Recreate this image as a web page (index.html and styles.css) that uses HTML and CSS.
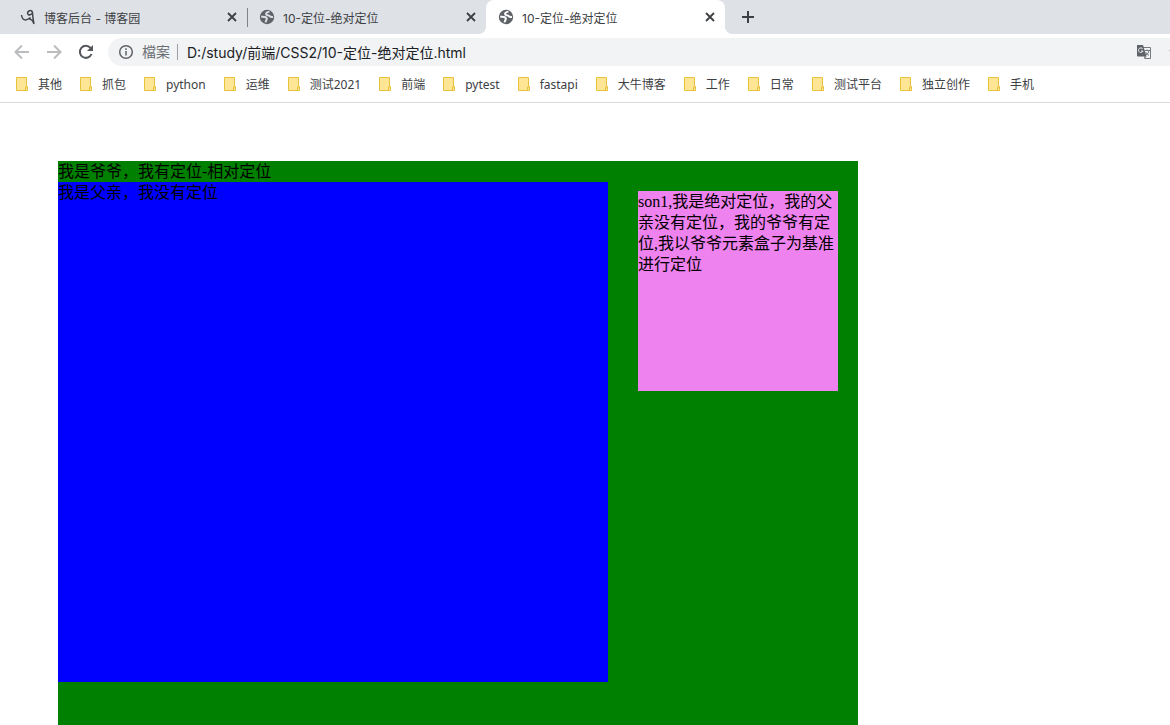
FILE: index.html
```html
<!DOCTYPE html>
<html lang="zh-CN">
<head>
  <meta charset="UTF-8">
  <meta name="viewport" content="width=device-width, initial-scale=1.0">
  <title>10-定位-绝对定位</title>
  <link rel="stylesheet" href="styles.css">
</head>
<body>
  <!-- 图标 -->
  <svg class="symbols" aria-hidden="true">
    <symbol id="globe" viewBox="0 0 16 16">
      <circle cx="8" cy="8" r="7.200" fill="#5f6368"/>
      <path d="M10.500 2.600C8 3 6.500 4.200 7.200 5.500c.6 1 2.400.4 3.300 1.400.8 1 1.800 1.400 3.500 1M2.200 7.800C4.500 7.600 7.300 8 7.800 9.400c.3 1.400-1 2-1.200 3.900" fill="none" stroke="currentColor" stroke-width="1.900"/>
    </symbol>
    <symbol id="close" viewBox="0 0 10 10">
      <path d="M1 1l8 8M9 1L1 9" fill="none" stroke="#3c4043" stroke-width="1.800"/>
    </symbol>
    <symbol id="folder" viewBox="0 0 12 14">
      <path d="M.5.500h10v9h1v4H.500z" fill="#ffe694" stroke="#e8c23f"/>
      <path d="M9.500 13.500v-3.500h1.500" fill="none" stroke="#e8c23f"/>
    </symbol>
  </svg>

  <!-- 标签栏 -->
  <div class="tabs">
    <div class="tab">
      <svg class="tab-icon" viewBox="0 0 16 16"><path d="M1.500 6c.5 3.500 2 5 4 5 1.500 0 3-1 5-2.500M12.500 3.500c-.3-2-2-2.300-3.500-1.500C7.300 3 7 5 8.500 5.700c1.600.6 3.500-.5 4-2.200.2 4 .5 7 1.500 11.500-1-3-2.500-5-5-5" fill="none" stroke="#45484b" stroke-width="1.500"/></svg>
      <button class="tab-title">博客后台 - 博客园</button>
      <button class="tab-close" aria-label="关闭"><svg><use href="#close"/></svg></button>
    </div>
    <div class="tab divided">
      <svg class="tab-icon"><use href="#globe"/></svg>
      <button class="tab-title">10-定位-绝对定位</button>
      <button class="tab-close" aria-label="关闭"><svg><use href="#close"/></svg></button>
    </div>
    <div class="tab active">
      <svg class="tab-icon"><use href="#globe"/></svg>
      <button class="tab-title">10-定位-绝对定位</button>
      <button class="tab-close" aria-label="关闭"><svg><use href="#close"/></svg></button>
    </div>
    <button class="new-tab" aria-label="新标签页"><svg viewBox="0 0 12 12"><path d="M6 0v12M0 6h12" stroke="#3c4043" stroke-width="2"/></svg></button>
  </div>

  <!-- 地址栏 -->
  <div class="toolbar">
    <button class="nav disabled" aria-label="后退"><svg viewBox="0 0 16 16"><path d="M15 8H2M8 1.500L1.500 8 8 14.500"/></svg></button>
    <button class="nav disabled" aria-label="前进"><svg viewBox="0 0 16 16"><path d="M1 8h13M8 1.500L14.500 8 8 14.500"/></svg></button>
    <button class="nav" aria-label="刷新"><svg viewBox="0 0 16 16"><path d="M13.500 10A6 6 0 1 1 12.500 4l1 1.500"/><path class="solid" d="M15 1v6H9z"/></svg></button>
    <div class="address">
      <svg class="info" viewBox="0 0 16 16"><circle cx="8" cy="8" r="6.300"/><path d="M8 7v4.500M8 4.300v1.600"/></svg>
      <label for="url">檔案</label>
      <input type="text" id="url" value="D:/study/前端/CSS2/10-定位-绝对定位.html">
      <button class="translate" aria-label="翻译"><svg viewBox="0 0 16 16">
        <path d="M6 3.500h8.500v11H8.500" fill="#f1f3f4" stroke="#777a7d"/>
        <path d="M1 1h6l3.500 11.500H2a1 1 0 0 1-1-1z" fill="#5f6368"/>
        <path d="M6.800 5A2.300 2.300 0 1 0 7 7H5" fill="none" stroke="#f1f3f4"/>
        <path d="M8.500 6.500H14M11 5.500v1M13 6.500c-.4 2.300-1.500 3.500-3 4.500M9.500 8c.7 1.500 2 2.500 3.500 3.500" fill="none" stroke="#777a7d"/>
        <path d="M8 12.500h2.500l-2 2z" fill="#5f6368"/>
      </svg></button>
      <button class="star" aria-label="收藏"><svg viewBox="0 0 16 16"><path d="M8 1l2 5h6l-5 4 2 5-5-3-5 3 2-5-5-4h6z"/></svg></button>
    </div>
  </div>

  <!-- 书签栏 -->
  <nav class="bookmarks">
    <a href="#"><svg><use href="#folder"/></svg>其他</a>
    <a href="#"><svg><use href="#folder"/></svg>抓包</a>
    <a href="#"><svg><use href="#folder"/></svg>python</a>
    <a href="#"><svg><use href="#folder"/></svg>运维</a>
    <a href="#"><svg><use href="#folder"/></svg>测试2021</a>
    <a href="#"><svg><use href="#folder"/></svg>前端</a>
    <a href="#"><svg><use href="#folder"/></svg>pytest</a>
    <a href="#"><svg><use href="#folder"/></svg>fastapi</a>
    <a href="#"><svg><use href="#folder"/></svg>大牛博客</a>
    <a href="#"><svg><use href="#folder"/></svg>工作</a>
    <a href="#"><svg><use href="#folder"/></svg>日常</a>
    <a href="#"><svg><use href="#folder"/></svg>测试平台</a>
    <a href="#"><svg><use href="#folder"/></svg>独立创作</a>
    <a href="#"><svg><use href="#folder"/></svg>手机</a>
  </nav>

  <!-- 页面内容 -->
  <main class="page">
    <div class="grandfather">我是爷爷，我有定位-相对定位
      <div class="father">我是父亲，我没有定位
        <div class="son1">son1,我是绝对定位，我的父亲没有定位，我的爷爷有定位,我以爷爷元素盒子为基准进行定位</div>
      </div>
    </div>
  </main>
</body>
</html>
```
FILE: styles.css
```css
* {
  box-sizing: border-box;
}
body {
  margin: 0;
  height: 100vh;
  display: flex;
  flex-direction: column;
  overflow: hidden;
  background: #fff;
  font-family: "Noto Sans", "Noto Sans CJK SC", sans-serif;
  font-size: 12px;
  color: #3c4043;
}
button {
  border: none;
  padding: 0;
  background: none;
  font: inherit;
  color: inherit;
}
svg {
  display: block;
  flex-shrink: 0;
}
.symbols {
  position: absolute;
  width: 0;
  height: 0;
}
/* 标签栏 */
.tabs {
  display: flex;
  flex-shrink: 0;
  height: 34px;
  padding-left: 8px;
  background: #dee1e6;
  font-family: Inter, "Noto Sans CJK SC", sans-serif;
}
.tab {
  position: relative;
  display: flex;
  align-items: center;
  width: 239px;
  padding: 0 7px 0 12px;
}
.tab-icon {
  width: 16px;
  height: 16px;
  margin-right: 8px;
  color: #dee1e6;
}
.tab.active .tab-icon {
  color: #fff;
}
.tab-title {
  flex: 1;
  text-align: left;
  white-space: nowrap;
}
.tab-close {
  padding: 3px;
}
.tab-close svg {
  width: 10px;
  height: 10px;
}
.tab.divided::before {
  content: "";
  position: absolute;
  left: 0;
  top: 8px;
  width: 1px;
  height: 19px;
  background: #808489;
}
.tab.active {
  background: #fff;
  border-radius: 8px 8px 0 0;
}
.tab.active::before,
.tab.active::after {
  content: "";
  position: absolute;
  bottom: 0;
  width: 8px;
  height: 8px;
}
.tab.active::before {
  right: 100%;
  background: radial-gradient(circle at 0 0, transparent 8px, #fff 8px);
}
.tab.active::after {
  left: 100%;
  background: radial-gradient(circle at 100% 0, transparent 8px, #fff 8px);
}
.new-tab {
  margin-left: 17px;
}
.new-tab svg {
  width: 12px;
  height: 12px;
}
/* 地址栏 */
.toolbar {
  display: flex;
  flex-shrink: 0;
  align-items: center;
  height: 36px;
  padding-left: 14px;
}
.nav {
  margin-right: 16px;
}
.nav svg {
  width: 16px;
  height: 16px;
  fill: none;
  stroke: #54575b;
  stroke-width: 2;
}
.nav .solid {
  fill: #54575b;
  stroke: none;
}
.nav.disabled svg {
  stroke: #babcbe;
}
.address {
  flex: 1;
  display: flex;
  align-items: center;
  height: 28px;
  margin-left: -2px;
  padding-left: 10px;
  background: #f1f3f4;
  border-radius: 14px 0 0 14px;
  font-family: Inter, "Noto Sans CJK SC", sans-serif;
  font-size: 14px;
}
.info {
  width: 16px;
  height: 16px;
  fill: none;
  stroke: #5f6368;
  stroke-width: 1.5;
}
.address label {
  margin-left: 8px;
  padding-right: 7px;
  border-right: 1px solid #9aa0a6;
  line-height: 16px;
  color: #6b6f73;
}
.address input {
  flex: 1;
  min-width: 0;
  padding: 0 0 0 9px;
  border: none;
  outline: none;
  background: none;
  font: inherit;
  color: #202124;
}
.translate svg {
  width: 16px;
  height: 16px;
}
.star {
  width: 1px;
  margin-left: 17px;
  overflow: hidden;
}
.star svg {
  width: 16px;
  height: 16px;
  fill: #5f6368;
}
/* 书签栏 */
.bookmarks {
  display: flex;
  flex-shrink: 0;
  align-items: center;
  gap: 18px;
  height: 33px;
  padding: 0 16px 4px;
  border-bottom: 1px solid #d9dadc;
}
.bookmarks a {
  display: flex;
  align-items: center;
  gap: 10px;
  color: inherit;
  text-decoration: none;
  white-space: nowrap;
}
.bookmarks svg {
  width: 12px;
  height: 14px;
}
/* 页面内容 */
.page {
  flex: 1;
  min-height: 0;
  padding: 8px;
  overflow: hidden;
  font-family: "Liberation Serif", "Noto Sans CJK SC", serif;
  font-size: 16px;
  line-height: 21px;
  color: #000;
}
.grandfather {
  position: relative;
  width: 800px;
  height: 600px;
  margin: 50px;
  background: green;
}
.father {
  width: 550px;
  height: 500px;
  background: blue;
}
.son1 {
  position: absolute;
  top: 30px;
  right: 20px;
  width: 200px;
  height: 200px;
  background: violet;
}
```
